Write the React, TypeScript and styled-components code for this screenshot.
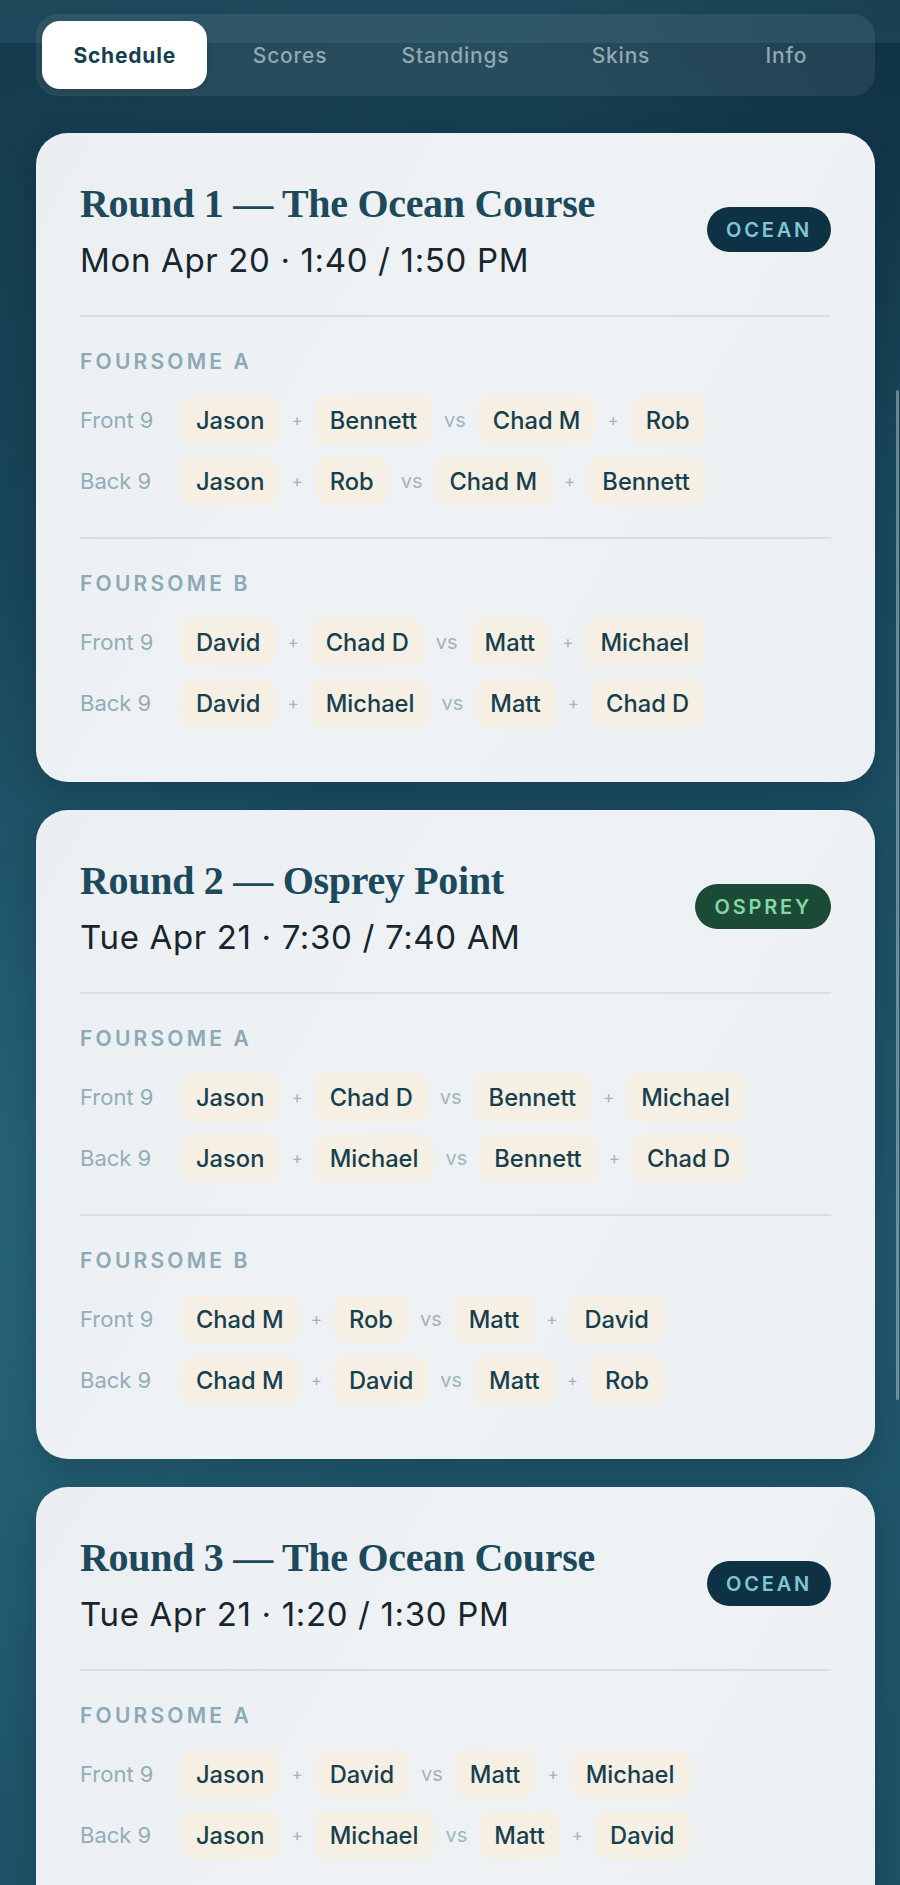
import React from "react";
import styled, { createGlobalStyle } from "styled-components";

const GlobalStyle = createGlobalStyle`
  html, body { margin: 0; padding: 0; }
  body {
    background: #1a4558;
    font-family: Inter, "Noto Sans", "Liberation Sans", sans-serif;
    -webkit-font-smoothing: antialiased;
  }
  * { box-sizing: border-box; }
`;

const Page = styled.div`
  position: relative;
  min-height: 1885px;
  background:
    radial-gradient(ellipse 70% 40% at 0% 55%, rgba(44, 110, 130, 0.55), transparent 70%),
    radial-gradient(ellipse 60% 30% at 100% 0%, rgba(10, 40, 56, 0.6), transparent 70%),
    linear-gradient(170deg, #143a4c 0%, #1b4b5f 35%, #21586c 60%, #1d4f63 100%);
  padding: 0 25px 40px 36px;
`;

const Header = styled.header`
  margin: 0 -25px 0 -36px;
  padding: 14px 25px 0 36px;
  background: linear-gradient(to bottom, rgba(60, 120, 140, 0.22) 43px, transparent 43px);
`;

const TabBar = styled.nav`
  display: flex;
  padding: 7px 6px;
  border-radius: 22px;
  background: rgba(255, 255, 255, 0.08);
`;

const Tab = styled.div<{ $active?: boolean }>`
  flex: 1;
  height: 68px;
  display: flex;
  align-items: center;
  justify-content: center;
  border-radius: 18px;
  font-size: 21px;
  font-weight: ${(p) => (p.$active ? 700 : 500)};
  letter-spacing: 0.8px;
  color: ${(p) => (p.$active ? "#163f50" : "#8fa9b5")};
  background: ${(p) => (p.$active ? "#ffffff" : "transparent")};
  box-shadow: ${(p) => (p.$active ? "0 2px 6px rgba(0,0,0,0.15)" : "none")};
`;

const CardList = styled.main`
  display: flex;
  flex-direction: column;
  gap: 28px;
  margin-top: 37px;
`;

const Card = styled.section`
  background: linear-gradient(120deg, #ebeff1 0%, #eef2f4 45%, #ecf0f2 100%);
  border-radius: 32px;
  padding: 47px 44px 23px;
  box-shadow: 0 10px 30px rgba(5, 25, 35, 0.25);
`;

const CardHeader = styled.div`
  display: flex;
  align-items: center;
  justify-content: space-between;
  padding-bottom: 36px;
  border-bottom: 2px solid #d9dfe2;
`;

const TitleBlock = styled.div`
  display: flex;
  flex-direction: column;
  gap: 13px;
`;

const Title = styled.h2`
  margin: 0;
  font-family: "Liberation Serif", "DejaVu Serif", serif;
  font-weight: 700;
  font-size: 40px;
  line-height: 48px;
  color: #1c4a5c;
  letter-spacing: -0.3px;
`;

const DateLine = styled.div`
  font-size: 33px;
  line-height: 38px;
  font-weight: 400;
  color: #17252d;
  letter-spacing: 0.65px;
`;

const Badge = styled.span<{ $bg: string; $fg: string }>`
  display: inline-flex;
  align-items: center;
  justify-content: center;
  height: 45px;
  padding: 0 19px;
  border-radius: 23px;
  background: ${(p) => p.$bg};
  color: ${(p) => p.$fg};
  font-size: 20px;
  font-weight: 600;
  letter-spacing: 2.8px;
`;

const Foursome = styled.div<{ $last?: boolean }>`
  padding: 32px 0;
  border-bottom: ${(p) => (p.$last ? "none" : "2px solid #d9dfe2")};
`;

const FoursomeLabel = styled.div`
  font-size: 21px;
  line-height: 25px;
  font-weight: 600;
  letter-spacing: 3.2px;
  color: #8ba9b6;
  margin-bottom: 22px;
`;

const Rows = styled.div`
  display: flex;
  flex-direction: column;
  gap: 13px;
`;

const Row = styled.div`
  display: flex;
  align-items: center;
  gap: 12px;
`;

const RowLabel = styled.span`
  width: 89px;
  font-size: 22px;
  color: #93adb8;
`;

const Chip = styled.span`
  display: inline-flex;
  align-items: center;
  height: 48px;
  padding: 0 15px;
  border-radius: 12px;
  background: #f6efe4;
  color: #17404f;
  font-size: 23.7px;
  font-weight: 500;
`;

const Sep = styled.span<{ $vs?: boolean }>`
  font-size: ${(p) => (p.$vs ? "20px" : "17px")};
  color: #a0b5be;
`;

const ScrollThumb = styled.div`
  position: absolute;
  right: 1px;
  top: 390px;
  width: 3px;
  height: 1010px;
  border-radius: 2px;
  background: rgba(200, 215, 222, 0.45);
`;

type Match = [string, string, string, string];
type Group = { name: string; front: Match; back: Match };
type Round = {
  title: string;
  date: string;
  course: "ocean" | "osprey";
  groups: Group[];
};

const rounds: Round[] = [
  {
    title: "Round 1 — The Ocean Course",
    date: "Mon Apr 20 · 1:40 / 1:50 PM",
    course: "ocean",
    groups: [
      { name: "FOURSOME A", front: ["Jason", "Bennett", "Chad M", "Rob"], back: ["Jason", "Rob", "Chad M", "Bennett"] },
      { name: "FOURSOME B", front: ["David", "Chad D", "Matt", "Michael"], back: ["David", "Michael", "Matt", "Chad D"] },
    ],
  },
  {
    title: "Round 2 — Osprey Point",
    date: "Tue Apr 21 · 7:30 / 7:40 AM",
    course: "osprey",
    groups: [
      { name: "FOURSOME A", front: ["Jason", "Chad D", "Bennett", "Michael"], back: ["Jason", "Michael", "Bennett", "Chad D"] },
      { name: "FOURSOME B", front: ["Chad M", "Rob", "Matt", "David"], back: ["Chad M", "David", "Matt", "Rob"] },
    ],
  },
  {
    title: "Round 3 — The Ocean Course",
    date: "Tue Apr 21 · 1:20 / 1:30 PM",
    course: "ocean",
    groups: [
      { name: "FOURSOME A", front: ["Jason", "David", "Matt", "Michael"], back: ["Jason", "Michael", "Matt", "David"] },
      { name: "FOURSOME B", front: ["Chad M", "Bennett", "Chad D", "Rob"], back: ["Chad M", "Rob", "Chad D", "Bennett"] },
    ],
  },
];

const badgeStyle = {
  ocean: { label: "OCEAN", bg: "#0f3144", fg: "#7fc6d6" },
  osprey: { label: "OSPREY", bg: "#1b4a37", fg: "#84d6a6" },
};

const tabs = ["Schedule", "Scores", "Standings", "Skins", "Info"];

function MatchRow({ label, m }: { label: string; m: Match }) {
  return (
    <Row>
      <RowLabel>{label}</RowLabel>
      <Chip>{m[0]}</Chip>
      <Sep>+</Sep>
      <Chip>{m[1]}</Chip>
      <Sep $vs>vs</Sep>
      <Chip>{m[2]}</Chip>
      <Sep>+</Sep>
      <Chip>{m[3]}</Chip>
    </Row>
  );
}

export default function App() {
  return (
    <>
      <GlobalStyle />
      <Page>
        <Header>
          <TabBar>
            {tabs.map((t, i) => (
              <Tab key={t} $active={i === 0}>
                {t}
              </Tab>
            ))}
          </TabBar>
        </Header>
        <CardList>
          {rounds.map((r) => {
            const b = badgeStyle[r.course];
            return (
              <Card key={r.title}>
                <CardHeader>
                  <TitleBlock>
                    <Title>{r.title}</Title>
                    <DateLine>{r.date}</DateLine>
                  </TitleBlock>
                  <Badge $bg={b.bg} $fg={b.fg}>
                    {b.label}
                  </Badge>
                </CardHeader>
                {r.groups.map((g, gi) => (
                  <Foursome key={g.name} $last={gi === r.groups.length - 1}>
                    <FoursomeLabel>{g.name}</FoursomeLabel>
                    <Rows>
                      <MatchRow label="Front 9" m={g.front} />
                      <MatchRow label="Back 9" m={g.back} />
                    </Rows>
                  </Foursome>
                ))}
              </Card>
            );
          })}
        </CardList>
        <ScrollThumb />
      </Page>
    </>
  );
}
